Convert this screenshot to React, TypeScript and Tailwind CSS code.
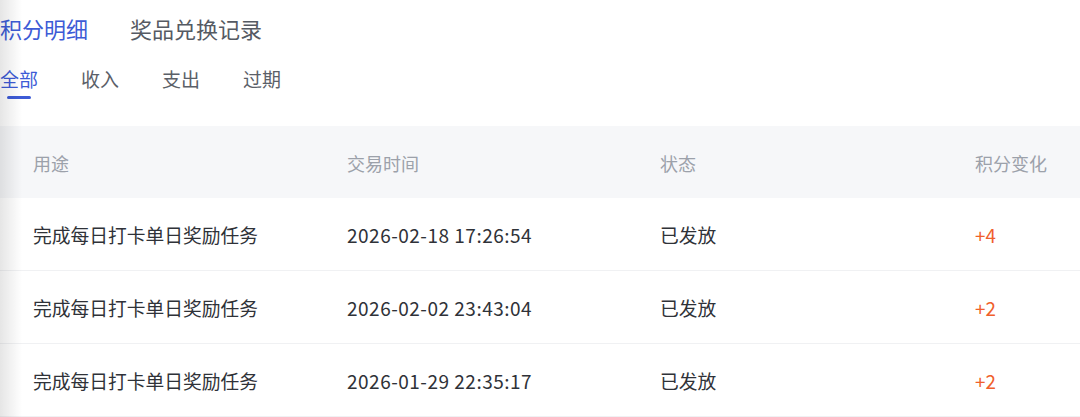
const records = [
  { use: '完成每日打卡单日奖励任务', time: '2026-02-18 17:26:54', status: '已发放', change: '+4' },
  { use: '完成每日打卡单日奖励任务', time: '2026-02-02 23:43:04', status: '已发放', change: '+2' },
  { use: '完成每日打卡单日奖励任务', time: '2026-01-29 22:35:17', status: '已发放', change: '+2' },
];

const cols = 'grid grid-cols-[314px_313px_315px_1fr] pl-[33px] items-center';

export default function App() {
  return (
    <div
      className="relative w-[1080px] h-[417px] overflow-hidden bg-white"
      style={{ fontFamily: '"Noto Sans CJK SC", "Noto Sans", sans-serif' }}
    >
      {/* top tabs */}
      <div className="flex items-center h-[56px] gap-[42px] text-[22px] leading-[28px]">
        <span className="text-[#3d5bd6]">积分明细</span>
        <span className="text-[#555a63]">奖品兑换记录</span>
      </div>

      {/* filter tabs */}
      <div className="flex h-[70px] gap-[43px] pt-[11px] text-[19px] leading-[24px]">
        {['全部', '收入', '支出', '过期'].map((t, i) => (
          <div key={t} className="flex flex-col items-center">
            <span className={i === 0 ? 'text-[#3d5bd6]' : 'text-[#5b6068]'}>{t}</span>
            {i === 0 && <div className="mt-[5px] h-[3px] w-[24px] rounded-full bg-[#3d5bd6]" />}
          </div>
        ))}
      </div>

      {/* table header */}
      <div className={`${cols} h-[72px] pt-[2px] bg-[#f6f7f9] text-[18px] text-[#9ca1aa]`}>
        <span>用途</span>
        <span>交易时间</span>
        <span>状态</span>
        <span>积分变化</span>
      </div>

      {records.map((r, i) => (
        <div key={i} className={`${cols} h-[73px] pt-[3px] border-b border-[#f0f1f3] text-[18.75px] text-[#2f3238]`}>
          <span>{r.use}</span>
          <span className="text-[19px] tracking-[0.5px]">{r.time}</span>
          <span>{r.status}</span>
          <span className="text-[#f0602c]">{r.change}</span>
        </div>
      ))}

      {/* left edge shadow */}
      <div className="pointer-events-none absolute inset-y-0 left-0 w-[22px] bg-gradient-to-r from-black/10 to-transparent" />
    </div>
  );
}
